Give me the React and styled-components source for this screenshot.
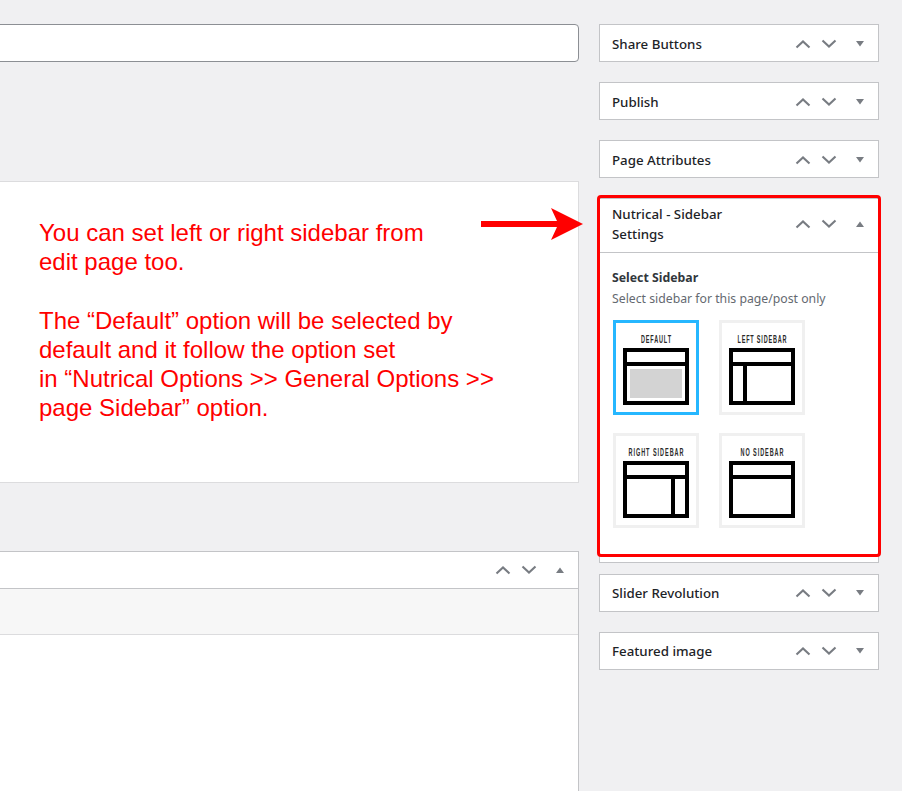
import React from 'react';
import styled, { createGlobalStyle } from 'styled-components';

const GlobalStyle = createGlobalStyle`
    html, body {
        margin: 0;
        height: 100%;
        overflow: hidden;
        background: #f0f0f2;
        font-family: "Noto Sans", "Open Sans", sans-serif;
    }
`;

const Chevron = ({ up }) => (
    <svg width="16" height="10" viewBox="0 0 16 10">
        <path d={up ? 'M1.5 8.5 L8 2.5 L14.5 8.5' : 'M1.5 1.5 L8 7.5 L14.5 1.5'} fill="none" stroke="#787c82" strokeWidth="2.1" />
    </svg>
);

const Handles = ({ opened }) => (
    <HandleGroup>
        <OrderButton><Chevron up /></OrderButton>
        <OrderButton><Chevron /></OrderButton>
        <ToggleButton>
            <svg width="10" height="6" viewBox="0 0 10 6">
                <path d={opened ? 'M1 6 L5 0.5 L9 6 Z' : 'M1 0 L9 0 L5 5.5 Z'} fill="#787c82" />
            </svg>
        </ToggleButton>
    </HandleGroup>
);

const labelScale = 0.55;

const Thumb = ({ label, labelWidth, selected, variant }) => (
    <ThumbBox selected={selected}>
        <svg width="80" height="89" viewBox="0 0 80 89">
            <text transform={`translate(40 20) scale(${labelScale} 1)`} textAnchor="middle"
                textLength={labelWidth / labelScale} lengthAdjust="spacing"
                fontFamily="Liberation Sans, sans-serif" fontSize="10" fontWeight="700" fill="#2a2a2a">{label}</text>
            {variant === 'default' && <rect x="14" y="46" width="52" height="29" fill="#d3d3d3" />}
            <rect x="9" y="27" width="62" height="53" fill="none" stroke="#000" strokeWidth="4" />
            <line x1="9" y1="41" x2="71" y2="41" stroke="#000" strokeWidth="4" />
            {variant === 'left' && <line x1="23" y1="41" x2="23" y2="80" stroke="#000" strokeWidth="4" />}
            {variant === 'right' && <line x1="57" y1="41" x2="57" y2="80" stroke="#000" strokeWidth="4" />}
        </svg>
    </ThumbBox>
);

export default function App() {
    return (
        <Page>
            <GlobalStyle />
            <MainColumn>
                <TitleInput />
                <EditorCard>
                    <Note>You can set left or right sidebar from</Note>
                    <Note>edit page too.</Note>
                    <NoteGap />
                    <Note>The “Default” option will be selected by</Note>
                    <Note>default and it follow the option set</Note>
                    <Note>in “Nutrical Options &gt;&gt; General Options &gt;&gt;</Note>
                    <Note>page Sidebar” option.</Note>
                </EditorCard>
                <WideBox>
                    <WideHeader><Handles opened /></WideHeader>
                    <WideToolbar />
                </WideBox>
            </MainColumn>
            <SideColumn>
                <PostBox><BoxHeader><BoxTitle>Share Buttons</BoxTitle><Handles /></BoxHeader></PostBox>
                <PostBox><BoxHeader><BoxTitle>Publish</BoxTitle><Handles /></BoxHeader></PostBox>
                <PostBox><BoxHeader><BoxTitle>Page Attributes</BoxTitle><Handles /></BoxHeader></PostBox>
                <HighlightedBox>
                    <BoxHeader tall>
                        <BoxTitle>Nutrical - Sidebar<br />Settings</BoxTitle>
                        <Handles opened />
                    </BoxHeader>
                    <BoxBody>
                        <FieldLabel>Select Sidebar</FieldLabel>
                        <FieldHint>Select sidebar for this page/post only</FieldHint>
                        <ThumbGrid>
                            <Thumb label="DEFAULT" labelWidth={30} selected variant="default" />
                            <Thumb label="LEFT SIDEBAR" labelWidth={49} variant="left" />
                            <Thumb label="RIGHT SIDEBAR" labelWidth={55} variant="right" />
                            <Thumb label="NO SIDEBAR" labelWidth={43} variant="none" />
                        </ThumbGrid>
                    </BoxBody>
                </HighlightedBox>
                <PostBox><BoxHeader centered><BoxTitle>Slider Revolution</BoxTitle><Handles /></BoxHeader></PostBox>
                <PostBox><BoxHeader centered><BoxTitle>Featured image</BoxTitle><Handles /></BoxHeader></PostBox>
            </SideColumn>
            <Arrow width="104" height="34" viewBox="0 0 104 34">
                <path d="M0 14 H76 L70 1 L102 17 L70 33 L76 20 H0 Z" fill="#f00" />
            </Arrow>
        </Page>
    );
}

const Page = styled.div`
    position: relative;
    display: grid;
    grid-template-columns: 579px 280px;
    column-gap: 20px;
    align-items: start;
    padding-top: 24px;
    height: 767px;
    overflow: hidden;
`;

const MainColumn = styled.div`
    display: flex;
    flex-direction: column;
    height: 100%;
`;

const TitleInput = styled.div`
    height: 36px;
    margin-left: -6px;
    background: #fff;
    border: 1px solid #8c8f94;
    border-radius: 4px;
`;

const EditorCard = styled.div`
    height: 264px;
    margin: 119px 0 0 -6px;
    padding: 36px 0 0 44px;
    background: #fff;
    border: 1px solid #dcdcde;
`;

const Note = styled.div`
    font-family: "Liberation Sans", Arial, sans-serif;
    font-size: 24px;
    line-height: 29px;
    color: #f00;
`;

const NoteGap = styled.div`
    height: 30px;
`;

const WideBox = styled.div`
    flex: 1;
    margin: 68px 0 -6px -6px;
    background: #fff;
    border: 1px solid #c3c4c7;
`;

const WideHeader = styled.div`
    display: flex;
    justify-content: flex-end;
    align-items: center;
    height: 36px;
    border-bottom: 1px solid #c3c4c7;
`;

const WideToolbar = styled.div`
    height: 45px;
    background: #f7f7f7;
    border-bottom: 1px solid #dcdcde;
`;

const SideColumn = styled.div`
    display: flex;
    flex-direction: column;
    gap: 20px;
`;

const PostBox = styled.div`
    background: #fff;
    border: 1px solid #c3c4c7;
`;

const HighlightedBox = styled(PostBox)`
    position: relative;
    height: 363px;
    margin-bottom: -9px;

    &::after {
        content: "";
        position: absolute;
        top: -4px;
        left: -3px;
        right: -3px;
        bottom: 5px;
        border: 3px solid #f00;
        border-radius: 4px;
    }
`;

const headerPadding = props => {
    if (props.tall) return '0 0 3px';
    return props.centered ? '0' : '2px 0 0';
};

const BoxHeader = styled.div`
    display: flex;
    align-items: center;
    justify-content: space-between;
    height: ${props => {
        if (props.tall) return '50px';
        return props.centered ? '36px' : '34px';
    }};
    padding: ${headerPadding};
    ${props => props.tall && 'border-bottom: 1px solid #c3c4c7;'}
`;

const BoxTitle = styled.h2`
    margin: 0 0 0 12px;
    font-size: 13.3px;
    line-height: 20px;
    font-weight: 500;
    color: #1d2327;
`;

const HandleGroup = styled.div`
    display: flex;
    align-items: center;
`;

const OrderButton = styled.span`
    display: flex;
    align-items: center;
    justify-content: center;
    width: 26px;
    height: 30px;
`;

const ToggleButton = styled(OrderButton)`
    width: 36px;
`;

const BoxBody = styled.div`
    padding: 16px 12px 0 12px;
`;

const FieldLabel = styled.div`
    font-size: 12.3px;
    line-height: 18px;
    font-weight: 700;
    color: #32373c;
`;

const FieldHint = styled.div`
    margin-top: 3px;
    font-size: 12.25px;
    line-height: 18px;
    color: #646970;
`;

const ThumbGrid = styled.div`
    display: grid;
    grid-template-columns: 86px 86px;
    gap: 18px 20px;
    margin: 12px 0 0 1px;
`;

const ThumbBox = styled.div`
    width: 80px;
    height: 89px;
    background: #fff;
    border: 3px solid ${props => (props.selected ? '#26b7ff' : '#f0f0f0')};

    svg {
        display: block;
    }
`;

const Arrow = styled.svg`
    position: absolute;
    left: 481px;
    top: 207px;
`;
